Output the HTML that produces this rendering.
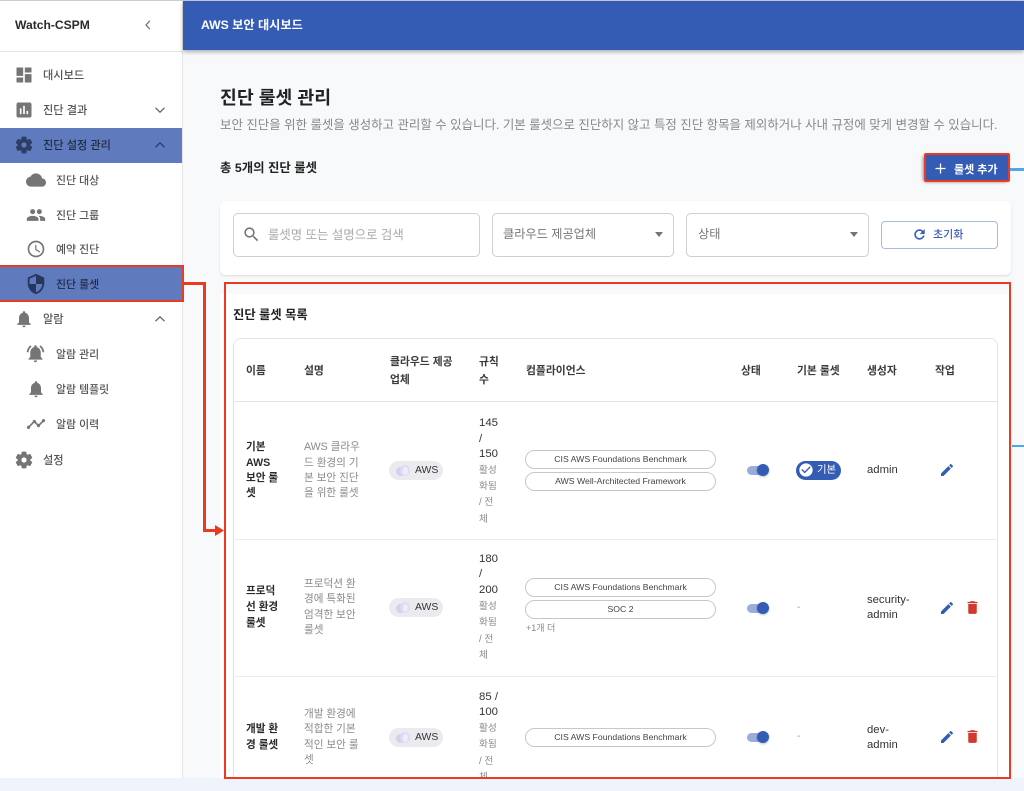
<!DOCTYPE html>
<html lang="ko"><head><meta charset="utf-8"><title>진단 룰셋 관리</title>
<style>
html,body{margin:0;padding:0}
body{width:1024px;height:791px;overflow:hidden;position:relative;background:#f8f9fb;font-family:"Liberation Sans","Noto Sans CJK KR",sans-serif;color:#2b2b2b}
div,span,svg{position:absolute;box-sizing:border-box}
.t{white-space:nowrap;line-height:20px;height:20px;margin-top:1px}
.m{font-size:11.2px;color:#555;font-weight:500;margin-top:1px}
.s{font-size:10.9px;color:#555;font-weight:500;margin-top:1px}
.h{font-size:10.8px;font-weight:700;color:#3a3a3a}
.n{font-size:10.6px;font-weight:700;color:#2b2b2b;margin-top:0}
.d{font-size:10.6px;color:#8a8a8a;margin-top:0}
.r{font-size:11.4px;color:#333}
.g{font-size:9.7px;color:#8a8a8a;margin-top:2px}
.c{font-size:11.3px;color:#333}
.chip{left:389px;width:54px;height:19px;background:#ebebef;border-radius:10px}
.chip b{position:absolute;left:26px;top:0;font-size:10.4px;line-height:20px;font-weight:400;color:#333}
.chip i{position:absolute;border-radius:50%}
.chip i.a{left:7px;top:6px;width:9px;height:9px;background:#d2d0ec}
.chip i.e{left:11px;top:4px;width:10px;height:11px;background:#dddcf2}
.chip i.f{left:14px;top:6px;width:5px;height:8px;background:#eeeef9}
.co{left:525px;width:191px;height:19px;border:1px solid #c8c8c8;border-radius:10px;background:#fff;text-align:center;font-size:8.7px;line-height:16px;color:#444;font-weight:500;white-space:nowrap}
.tr{left:747px;width:20px;height:9px;border-radius:5px;background:#99acdb}
.th{left:757px;width:12px;height:12px;border-radius:50%;background:#345cb5;box-shadow:0 1px 2px rgba(0,0,0,.25)}
.red{background:#ea3a1f}
</style></head><body>

<div style="left:0;top:0;width:182px;height:778px;background:#fff"></div>
<div style="left:182px;top:0;width:1px;height:778px;background:#e6e6e6"></div>
<div style="left:0;top:0;width:1024px;height:1px;background:#c9ced6"></div>
<div style="left:0;top:51px;width:182px;height:1px;background:#e5e5e5"></div>
<div style="left:183px;top:1px;width:841px;height:49px;background:#345cb5;box-shadow:0 2px 4px rgba(0,0,0,.3)"></div>

<div class="t" style="left:15px;top:14px;font-size:12.1px;font-weight:700;color:#2b2b2b">Watch-CSPM</div>
<svg style="left:140px;top:17px" width="16" height="16" viewBox="0 0 16 16"><path d="M9.800 3.800L6 8l3.800 4.200" fill="none" stroke="#777" stroke-width="1.300"/></svg>

<div style="left:0;top:128px;width:182px;height:35px;background:#5f7abd"></div>
<div style="left:0;top:267px;width:182px;height:35px;background:#5f7abd"></div>

<svg style="left:14px;top:65px" width="20" height="20" viewBox="0 0 24 24" fill="#757575"><path d="M3 13h8V3H3v10zm0 8h8v-6H3v6zm10 0h8V11h-8v10zm0-18v6h8V3h-8z"/></svg>
<div class="t m" style="left:43px;top:65px">대시보드</div>
<svg style="left:14px;top:100px" width="20" height="20" viewBox="0 0 24 24" fill="#757575"><path d="M19 3H5c-1.100 0-2 .9-2 2v14c0 1.100.9 2 2 2h14c1.100 0 2-.9 2-2V5c0-1.100-.9-2-2-2zM9 17H7v-7h2v7zm4 0h-2V7h2v10zm4 0h-2v-4h2v4z"/></svg>
<div class="t m" style="left:43px;top:100px">진단 결과</div>
<svg style="left:152px;top:102px" width="16" height="16" viewBox="0 0 16 16"><path d="M3.500 5.800L8 10.200l4.500-4.400" fill="none" stroke="#666" stroke-width="1.300"/></svg>

<svg style="left:14px;top:135px" width="20" height="20" viewBox="0 0 24 24" fill="#2c3e63" stroke="#2c3e63" stroke-width="1"><path d="M19.140 12.940c.04-.3.06-.61.06-.94 0-.32-.02-.64-.07-.94l2.030-1.580c.18-.14.23-.41.12-.61l-1.920-3.320c-.12-.22-.37-.29-.59-.22l-2.390.96c-.5-.38-1.030-.7-1.620-.94l-.36-2.540c-.04-.24-.24-.41-.48-.41h-3.840c-.24 0-.43.17-.47.41l-.36 2.540c-.59.24-1.130.57-1.620.94l-2.390-.96c-.22-.08-.47 0-.59.22L2.740 8.870c-.12.21-.08.47.12.61l2.030 1.580c-.05.3-.09.63-.09.94s.02.64.07.94l-2.030 1.580c-.18.14-.23.41-.12.61l1.920 3.320c.12.22.37.29.59.22l2.390-.96c.5.38 1.030.7 1.620.94l.36 2.540c.05.24.24.41.48.41h3.840c.24 0 .44-.17.47-.41l.36-2.540c.59-.24 1.130-.56 1.620-.94l2.390.96c.22.08.47 0 .59-.22l1.920-3.320c.12-.22.07-.47-.12-.61l-2.010-1.580zM12 15.600c-1.980 0-3.600-1.620-3.600-3.600s1.620-3.600 3.600-3.600 3.600 1.620 3.600 3.600-1.620 3.600-3.600 3.600z"/></svg>
<div class="t m" style="left:43px;top:135px;color:#1f2a44">진단 설정 관리</div>
<svg style="left:152px;top:137px" width="16" height="16" viewBox="0 0 16 16"><path d="M3.500 10.200L8 5.800l4.500 4.400" fill="none" stroke="#2c3e63" stroke-width="1.300"/></svg>

<svg style="left:26px;top:170px" width="20" height="20" viewBox="0 0 24 24" fill="#757575"><path d="M19.350 10.040C18.670 6.590 15.640 4 12 4 9.110 4 6.600 5.640 5.350 8.040 2.340 8.360 0 10.910 0 14c0 3.310 2.690 6 6 6h13c2.760 0 5-2.240 5-5 0-2.640-2.050-4.780-4.650-4.960z"/></svg>
<div class="t s" style="left:56px;top:170px">진단 대상</div>
<svg style="left:26px;top:205px" width="20" height="20" viewBox="0 0 24 24" fill="#757575"><path d="M16 11c1.660 0 2.990-1.340 2.990-3S17.660 5 16 5c-1.660 0-3 1.340-3 3s1.340 3 3 3zm-8 0c1.660 0 2.990-1.340 2.990-3S9.660 5 8 5C6.340 5 5 6.340 5 8s1.340 3 3 3zm0 2c-2.330 0-7 1.170-7 3.500V19h14v-2.500c0-2.330-4.670-3.500-7-3.500zm8 0c-.29 0-.62.02-.97.05 1.160.84 1.970 1.970 1.970 3.450V19h6v-2.500c0-2.330-4.670-3.500-7-3.500z"/></svg>
<div class="t s" style="left:56px;top:205px">진단 그룹</div>
<svg style="left:26px;top:239px" width="20" height="20" viewBox="0 0 24 24" fill="#757575"><path d="M11.990 2C6.470 2 2 6.480 2 12s4.470 10 9.990 10C17.520 22 22 17.520 22 12S17.520 2 11.990 2zM12 20c-4.420 0-8-3.580-8-8s3.580-8 8-8 8 3.580 8 8-3.580 8-8 8zm.5-13H11v6l5.250 3.150.75-1.230-4.500-2.670z"/></svg>
<div class="t s" style="left:56px;top:239px">예약 진단</div>
<svg style="left:25px;top:273px" width="22" height="22" viewBox="0 0 24 24" fill="#27375c"><path d="M12 1L3 5v6c0 5.550 3.840 10.740 9 12 5.160-1.260 9-6.450 9-12V5l-9-4zm0 10.990h7c-.53 4.120-3.280 7.790-7 8.940V12H5V6.300l7-3.110v8.800z"/></svg>
<div class="t s" style="left:56px;top:274px;color:#1f2a44">진단 룰셋</div>

<svg style="left:14px;top:309px" width="20" height="20" viewBox="0 0 24 24" fill="#757575"><path d="M12 22c1.100 0 2-.9 2-2h-4c0 1.100.89 2 2 2zm6-6v-5c0-3.070-1.640-5.640-4.500-6.320V4c0-.83-.67-1.500-1.500-1.500s-1.500.67-1.500 1.500v.68C7.630 5.360 6 7.920 6 11v5l-2 2v1h16v-1l-2-2z"/></svg>
<div class="t m" style="left:43px;top:309px">알람</div>
<svg style="left:152px;top:311px" width="16" height="16" viewBox="0 0 16 16"><path d="M3.500 10.200L8 5.800l4.500 4.400" fill="none" stroke="#666" stroke-width="1.300"/></svg>
<svg style="left:25px;top:343px" width="21" height="21" viewBox="0 0 24 24" fill="#757575"><path d="M7.580 4.080L6.150 2.650C3.750 4.480 2.170 7.300 2.030 10.500h2c.15-2.650 1.510-4.970 3.550-6.420zm12.390 6.420h2c-.15-3.200-1.730-6.020-4.120-7.850l-1.420 1.430c2.020 1.450 3.390 3.770 3.540 6.420zM18 11c0-3.070-1.640-5.640-4.500-6.320V4c0-.83-.67-1.500-1.500-1.500s-1.500.67-1.500 1.500v.68C7.630 5.360 6 7.920 6 11v5l-2 2v1h16v-1l-2-2v-5zm-6 11c.14 0 .27-.01.4-.04.65-.14 1.180-.58 1.440-1.180.1-.24.15-.5.15-.78h-4c.01 1.100.9 2 2.010 2z"/></svg>
<div class="t s" style="left:56px;top:344px">알람 관리</div>
<svg style="left:26px;top:379px" width="20" height="20" viewBox="0 0 24 24" fill="#757575"><path d="M12 22c1.100 0 2-.9 2-2h-4c0 1.100.89 2 2 2zm6-6v-5c0-3.070-1.640-5.640-4.500-6.320V4c0-.83-.67-1.500-1.500-1.500s-1.500.67-1.500 1.500v.68C7.630 5.360 6 7.920 6 11v5l-2 2v1h16v-1l-2-2z"/></svg>
<div class="t s" style="left:56px;top:379px">알람 템플릿</div>
<svg style="left:26px;top:414px" width="20" height="20" viewBox="0 0 24 24" fill="#757575"><path d="M23 8c0 1.100-.9 2-2 2-.18 0-.35-.02-.51-.07l-3.560 3.550c.05.16.07.34.07.52 0 1.100-.9 2-2 2s-2-.9-2-2c0-.18.02-.36.07-.52l-2.550-2.550c-.16.05-.34.07-.52.07s-.36-.02-.52-.07l-4.550 4.560c.05.16.07.33.07.51 0 1.100-.9 2-2 2s-2-.9-2-2 .9-2 2-2c.18 0 .35.02.51.07l4.560-4.550C8.020 9.360 8 9.180 8 9c0-1.100.9-2 2-2s2 .9 2 2c0 .18-.02.36-.07.52l2.550 2.550c.16-.05.34-.07.52-.07s.36.02.52.07l3.550-3.560C19.020 8.350 19 8.180 19 8c0-1.100.9-2 2-2s2 .9 2 2z"/></svg>
<div class="t s" style="left:56px;top:414px">알람 이력</div>
<svg style="left:14px;top:450px" width="20" height="20" viewBox="0 0 24 24" fill="#757575" stroke="#757575" stroke-width="1"><path d="M19.140 12.940c.04-.3.06-.61.06-.94 0-.32-.02-.64-.07-.94l2.030-1.580c.18-.14.23-.41.12-.61l-1.920-3.320c-.12-.22-.37-.29-.59-.22l-2.390.96c-.5-.38-1.030-.7-1.620-.94l-.36-2.540c-.04-.24-.24-.41-.48-.41h-3.840c-.24 0-.43.17-.47.41l-.36 2.540c-.59.24-1.130.57-1.620.94l-2.390-.96c-.22-.08-.47 0-.59.22L2.740 8.870c-.12.21-.08.47.12.61l2.030 1.580c-.05.3-.09.63-.09.94s.02.64.07.94l-2.030 1.580c-.18.14-.23.41-.12.61l1.920 3.320c.12.22.37.29.59.22l2.390-.96c.5.38 1.030.7 1.620.94l.36 2.540c.05.24.24.41.48.41h3.840c.24 0 .44-.17.47-.41l.36-2.540c.59-.24 1.130-.56 1.620-.94l2.390.96c.22.08.47 0 .59-.22l1.920-3.320c.12-.22.07-.47-.12-.61l-2.010-1.580zM12 15.600c-1.980 0-3.600-1.620-3.600-3.600s1.620-3.600 3.600-3.600 3.600 1.620 3.600 3.600-1.620 3.600-3.600 3.600z"/></svg>
<div class="t m" style="left:43px;top:450px">설정</div>

<div class="t" style="left:201px;top:14px;font-size:12.2px;font-weight:700;color:#fff">AWS 보안 대시보드</div>

<div class="t" style="left:220px;top:87px;font-size:18.3px;font-weight:700;color:#222">진단 룰셋 관리</div>
<div class="t" style="left:220px;top:114px;font-size:12.44px;color:#888">보안 진단을 위한 룰셋을 생성하고 관리할 수 있습니다. 기본 룰셋으로 진단하지 않고 특정 진단 항목을 제외하거나 사내 규정에 맞게 변경할 수 있습니다.</div>
<div class="t" style="left:220px;top:157px;font-size:12.4px;font-weight:700;color:#222">총 5개의 진단 룰셋</div>

<div style="left:924px;top:154px;width:85px;height:27px;background:#345cb5;border-radius:3px;box-shadow:-1px 1px 3px rgba(0,0,0,.45)"></div>
<svg style="left:933px;top:161px" width="15" height="15" viewBox="0 0 15 15"><path d="M7.500 2.500v10M2.500 7.500h10" stroke="#fff" stroke-width="1.300"/></svg>
<div class="t" style="left:954px;top:159px;font-size:11px;font-weight:700;color:#fff">룰셋 추가</div>

<div style="left:220px;top:201px;width:791px;height:74px;background:#fff;border-radius:6px;box-shadow:0 1px 2px rgba(0,0,0,.12)"></div>
<div style="left:233px;top:213px;width:247px;height:44px;border:1px solid #cfcfcf;border-radius:5px"></div>
<svg style="left:242px;top:225px" width="19" height="19" viewBox="0 0 24 24" fill="#757575"><path d="M15.500 14h-.79l-.28-.27C15.410 12.590 16 11.110 16 9.500 16 5.910 13.090 3 9.500 3S3 5.910 3 9.500 5.910 16 9.500 16c1.610 0 3.090-.59 4.230-1.570l.27.28v.79l5 4.990L20.490 19l-4.990-5zm-6 0C7.010 14 5 11.990 5 9.500S7.010 5 9.500 5 14 7.010 14 9.500 11.990 14 9.500 14z"/></svg>
<div class="t" style="left:268px;top:224px;font-size:12.4px;color:#aaa">룰셋명 또는 설명으로 검색</div>
<div style="left:492px;top:213px;width:182px;height:44px;border:1px solid #cfcfcf;border-radius:5px"></div>
<div class="t" style="left:503px;top:223px;font-size:12.2px;color:#777">클라우드 제공업체</div>
<svg style="left:655px;top:232px" width="8" height="5" viewBox="0 0 8 5"><path d="M0 0h8L4 5z" fill="#757575"/></svg>
<div style="left:686px;top:213px;width:183px;height:44px;border:1px solid #cfcfcf;border-radius:5px"></div>
<div class="t" style="left:698px;top:223px;font-size:12.2px;color:#777">상태</div>
<svg style="left:850px;top:232px" width="8" height="5" viewBox="0 0 8 5"><path d="M0 0h8L4 5z" fill="#757575"/></svg>
<div style="left:881px;top:221px;width:117px;height:28px;border:1px solid #a9b9e0;border-radius:4px;background:#fff"></div>
<svg style="left:912px;top:227px" width="15" height="15" viewBox="0 0 24 24" fill="#345cb5" stroke="#345cb5" stroke-width=".7"><path d="M17.650 6.350C16.200 4.900 14.210 4 12 4c-4.420 0-7.990 3.580-7.990 8s3.570 8 7.990 8c3.730 0 6.840-2.550 7.730-6h-2.080c-.82 2.330-3.040 4-5.650 4-3.310 0-6-2.690-6-6s2.690-6 6-6c1.660 0 3.140.69 4.220 1.780L13 11h7V4l-2.350 2.350z"/></svg>
<div class="t" style="left:933px;top:224px;font-size:11px;font-weight:500;color:#3a5fb5">초기화</div>

<div style="left:220px;top:294px;width:791px;height:484px;background:#fff;overflow:hidden">
 <div style="left:13px;top:44px;width:765px;height:460px;border:1px solid #e4e4e4;border-radius:8px"></div>
 <div style="left:13px;top:107px;width:765px;height:1px;background:#e4e4e4"></div>
 <div style="left:13px;top:245px;width:765px;height:1px;background:#ececec"></div>
 <div style="left:13px;top:382px;width:765px;height:1px;background:#ececec"></div>
</div>
<div class="t" style="left:233px;top:304px;font-size:12.3px;font-weight:700;color:#222">진단 룰셋 목록</div>

<div class="t h" style="left:246px;top:360px">이름</div>
<div class="t h" style="left:304px;top:360px">설명</div>
<div class="t h" style="left:390px;top:351px">클라우드 제공</div>
<div class="t h" style="left:390px;top:369px">업체</div>
<div class="t h" style="left:479px;top:351px">규칙</div>
<div class="t h" style="left:479px;top:369px">수</div>
<div class="t h" style="left:526px;top:360px">컴플라이언스</div>
<div class="t h" style="left:741px;top:360px">상태</div>
<div class="t h" style="left:797px;top:360px">기본 룰셋</div>
<div class="t h" style="left:867px;top:360px">생성자</div>
<div class="t h" style="left:935px;top:360px">작업</div>

<div class="t n" style="left:246px;top:437px">기본</div>
<div class="t n" style="left:246px;top:453px">AWS</div>
<div class="t n" style="left:246px;top:468px">보안 룰</div>
<div class="t n" style="left:246px;top:483px">셋</div>
<div class="t d" style="left:304px;top:437px">AWS 클라우</div>
<div class="t d" style="left:304px;top:453px">드 환경의 기</div>
<div class="t d" style="left:304px;top:468px">본 보안 진단</div>
<div class="t d" style="left:304px;top:483px">을 위한 룰셋</div>
<div class="chip" style="top:461px"><i class="a"></i><i class="e"></i><i class="f"></i><b>AWS</b></div>
<div class="t r" style="left:479px;top:412px">145</div>
<div class="t r" style="left:479px;top:428px">/</div>
<div class="t r" style="left:479px;top:443px">150</div>
<div class="t g" style="left:479px;top:459px">활성</div>
<div class="t g" style="left:479px;top:475px">화됨</div>
<div class="t g" style="left:479px;top:491px">/ 전</div>
<div class="t g" style="left:479px;top:508px">체</div>
<div class="co" style="top:450px">CIS AWS Foundations Benchmark</div>
<div class="co" style="top:472px">AWS Well-Architected Framework</div>
<div class="tr" style="top:466px"></div><div class="th" style="top:464px"></div>
<div style="left:796px;top:461px;width:45px;height:19px;background:#345cb5;border-radius:10px"></div>
<svg style="left:798px;top:462px" width="16" height="16" viewBox="0 0 24 24" fill="#fff"><path d="M12 2C6.480 2 2 6.480 2 12s4.480 10 10 10 10-4.480 10-10S17.520 2 12 2zm-2 15l-5-5 1.410-1.410L10 14.170l7.590-7.590L19 8l-9 9z"/></svg>
<div class="t" style="left:817px;top:460px;font-size:10.4px;color:#fff">기본</div>
<div class="t c" style="left:867px;top:459px">admin</div>
<svg style="left:939px;top:462px" width="16" height="16" viewBox="0 0 24 24" fill="#345cb5"><path d="M3 17.250V21h3.750L17.810 9.940l-3.750-3.750L3 17.250zM20.710 7.040c.39-.39.39-1.020 0-1.410l-2.340-2.340c-.39-.39-1.020-.39-1.410 0l-1.830 1.830 3.750 3.750 1.830-1.830z"/></svg>

<div class="t n" style="left:246px;top:581px">프로덕</div>
<div class="t n" style="left:246px;top:597px">선 환경</div>
<div class="t n" style="left:246px;top:613px">룰셋</div>
<div class="t d" style="left:304px;top:574px">프로덕션 환</div>
<div class="t d" style="left:304px;top:589px">경에 특화된</div>
<div class="t d" style="left:304px;top:605px">엄격한 보안</div>
<div class="t d" style="left:304px;top:620px">룰셋</div>
<div class="chip" style="top:598px"><i class="a"></i><i class="e"></i><i class="f"></i><b>AWS</b></div>
<div class="t r" style="left:479px;top:548px">180</div>
<div class="t r" style="left:479px;top:563px">/</div>
<div class="t r" style="left:479px;top:579px">200</div>
<div class="t g" style="left:479px;top:595px">활성</div>
<div class="t g" style="left:479px;top:611px">화됨</div>
<div class="t g" style="left:479px;top:628px">/ 전</div>
<div class="t g" style="left:479px;top:644px">체</div>
<div class="co" style="top:578px">CIS AWS Foundations Benchmark</div>
<div class="co" style="top:600px">SOC 2</div>
<div class="t" style="left:526px;top:617px;font-size:9px;color:#888">+1개 더</div>
<div class="tr" style="top:604px"></div><div class="th" style="top:602px"></div>
<div class="t" style="left:797px;top:597px;font-size:10px;color:#999">-</div>
<div class="t c" style="left:867px;top:589px">security-</div>
<div class="t c" style="left:867px;top:604px">admin</div>
<svg style="left:939px;top:600px" width="16" height="16" viewBox="0 0 24 24" fill="#345cb5"><path d="M3 17.250V21h3.750L17.810 9.940l-3.750-3.750L3 17.250zM20.710 7.040c.39-.39.39-1.020 0-1.410l-2.340-2.340c-.39-.39-1.020-.39-1.410 0l-1.830 1.830 3.750 3.750 1.830-1.830z"/></svg>
<svg style="left:964px;top:599px" width="17" height="17" viewBox="0 0 24 24" fill="#d0392f"><path d="M6 19c0 1.100.9 2 2 2h8c1.100 0 2-.9 2-2V7H6v12zM19 4h-3.500l-1-1h-5l-1 1H5v2h14V4z"/></svg>

<div style="left:225px;top:680px;width:784px;height:97px;overflow:hidden">
 <div class="t n" style="left:21px;top:39px">개발 환</div>
 <div class="t n" style="left:21px;top:55px">경 룰셋</div>
 <div class="t d" style="left:79px;top:24px">개발 환경에</div>
 <div class="t d" style="left:79px;top:39px">적합한 기본</div>
 <div class="t d" style="left:79px;top:55px">적인 보안 룰</div>
 <div class="t d" style="left:79px;top:70px">셋</div>
 <div class="chip" style="left:164px;top:48px"><i class="a"></i><i class="e"></i><i class="f"></i><b>AWS</b></div>
 <div class="t r" style="left:254px;top:6px">85 /</div>
 <div class="t r" style="left:254px;top:21px">100</div>
 <div class="t g" style="left:254px;top:37px">활성</div>
 <div class="t g" style="left:254px;top:53px">화됨</div>
 <div class="t g" style="left:254px;top:70px">/ 전</div>
 <div class="t g" style="left:254px;top:86px">체</div>
 <div class="co" style="left:300px;top:48px">CIS AWS Foundations Benchmark</div>
 <div class="tr" style="left:522px;top:53px"></div><div class="th" style="left:532px;top:51px"></div>
 <div class="t" style="left:572px;top:46px;font-size:10px;color:#999">-</div>
 <div class="t c" style="left:642px;top:39px">dev-</div>
 <div class="t c" style="left:642px;top:54px">admin</div>
 <svg style="left:714px;top:49px" width="16" height="16" viewBox="0 0 24 24" fill="#345cb5"><path d="M3 17.250V21h3.750L17.810 9.940l-3.750-3.750L3 17.250zM20.710 7.040c.39-.39.39-1.020 0-1.410l-2.340-2.340c-.39-.39-1.020-.39-1.410 0l-1.830 1.830 3.750 3.750 1.830-1.830z"/></svg>
 <svg style="left:739px;top:48px" width="17" height="17" viewBox="0 0 24 24" fill="#d0392f"><path d="M6 19c0 1.100.9 2 2 2h8c1.100 0 2-.9 2-2V7H6v12zM19 4h-3.500l-1-1h-5l-1 1H5v2h14V4z"/></svg>
</div>

<div style="left:0;top:778px;width:1024px;height:13px;background:#eff3fb"></div>

<div style="left:224px;top:282px;width:787px;height:497px;border:2px solid #ea3a1f"></div>
<div style="left:0;top:265px;width:184px;height:37px;border:2px solid #ea3a1f;border-left:0"></div>
<div class="red" style="left:184px;top:282px;width:21px;height:3px"></div>
<div class="red" style="left:203px;top:282px;width:3px;height:249px"></div>
<div class="red" style="left:203px;top:529px;width:13px;height:3px"></div>
<svg style="left:215px;top:525px" width="9" height="11" viewBox="0 0 9 11"><path d="M0 0l9 5.500-9 5.500z" fill="#ea3a1f"/></svg>
<div style="left:924px;top:153px;width:86px;height:29px;border:2px solid #ea3a1f;border-radius:2px"></div>
<div style="left:1010px;top:168px;width:14px;height:3px;background:#4aa9e9"></div>
<div style="left:1012px;top:445px;width:12px;height:2px;background:#4aa9e9"></div>
</body></html>
